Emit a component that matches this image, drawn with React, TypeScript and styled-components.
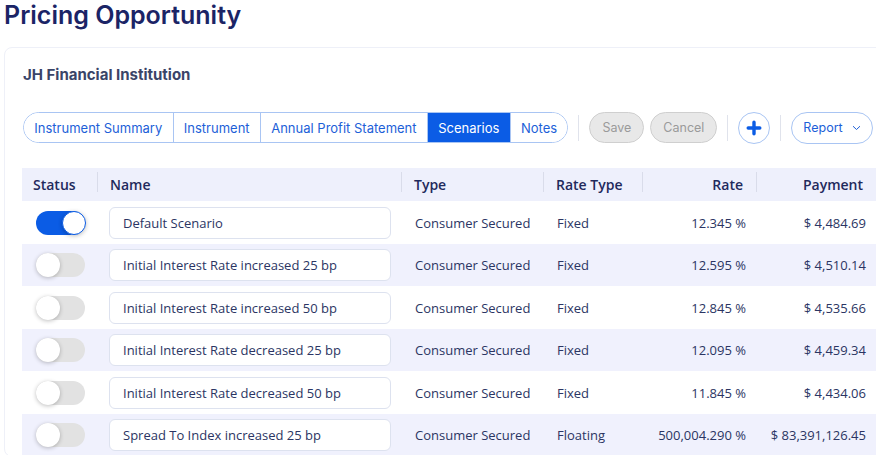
import { FC } from "react";
import styled, { createGlobalStyle } from "styled-components";

const GlobalStyle = createGlobalStyle`
  html, body {
    margin: 0;
    padding: 0;
    background: #fff;
    overflow: hidden;
  }
  * {
    box-sizing: border-box;
  }
`;

type Scenario = {
  active: boolean;
  name: string;
  type: string;
  rateType: string;
  rate: string;
  payment: string;
};

const scenarios: Scenario[] = [
  { active: true, name: "Default Scenario", type: "Consumer Secured", rateType: "Fixed", rate: "12.345 %", payment: "$ 4,484.69" },
  { active: false, name: "Initial Interest Rate increased 25 bp", type: "Consumer Secured", rateType: "Fixed", rate: "12.595 %", payment: "$ 4,510.14" },
  { active: false, name: "Initial Interest Rate increased 50 bp", type: "Consumer Secured", rateType: "Fixed", rate: "12.845 %", payment: "$ 4,535.66" },
  { active: false, name: "Initial Interest Rate decreased 25 bp", type: "Consumer Secured", rateType: "Fixed", rate: "12.095 %", payment: "$ 4,459.34" },
  { active: false, name: "Initial Interest Rate decreased 50 bp", type: "Consumer Secured", rateType: "Fixed", rate: "11.845 %", payment: "$ 4,434.06" },
  { active: false, name: "Spread To Index increased 25 bp", type: "Consumer Secured", rateType: "Floating", rate: "500,004.290 %", payment: "$ 83,391,126.45" },
];

const tabs = ["Instrument Summary", "Instrument", "Annual Profit Statement", "Scenarios", "Notes"];

const App: FC = () => {
  return (
    <Page>
      <GlobalStyle />
      <Title>Pricing Opportunity</Title>
      <Card>
        <Institution>JH Financial Institution</Institution>
        <Toolbar>
          <TabGroup>
            {tabs.map((t) => (
              <Tab key={t} $active={t === "Scenarios"}>
                {t}
              </Tab>
            ))}
          </TabGroup>
          <Divider />
          <GreyButton>Save</GreyButton>
          <GreyButton>Cancel</GreyButton>
          <Divider />
          <AddButton aria-label="Add">
            <svg width="16" height="16" viewBox="0 0 16 16">
              <path d="M8 2.2v11.6M2.2 8h11.6" stroke="#0b5ce5" strokeWidth="3.4" strokeLinecap="round" />
            </svg>
          </AddButton>
          <Divider />
          <ReportButton>
            Report
            <svg width="9" height="6" viewBox="0 0 9 6">
              <path d="M1 1.2l3.5 3.3L8 1.2" fill="none" stroke="#1d5fd8" strokeWidth="1" />
            </svg>
          </ReportButton>
        </Toolbar>

        <Table>
          <HeaderRow>
            <HeadCell>Status</HeadCell>
            <HeadCell $sep>Name</HeadCell>
            <HeadCell $sep>Type</HeadCell>
            <HeadCell $sep>Rate Type</HeadCell>
            <HeadCell $sep $right>Rate</HeadCell>
            <HeadCell $sep $right>Payment</HeadCell>
          </HeaderRow>
          {scenarios.map((s, i) => (
            <Row key={s.name} $striped={i % 2 === 1}>
              <Cell $center>
                <Toggle $on={s.active}>
                  <Knob $on={s.active} />
                </Toggle>
              </Cell>
              <Cell $input>
                <NameInput>{s.name}</NameInput>
              </Cell>
              <Cell>{s.type}</Cell>
              <Cell>{s.rateType}</Cell>
              <Cell $right>{s.rate}</Cell>
              <Cell $right>{s.payment}</Cell>
            </Row>
          ))}
        </Table>
      </Card>
    </Page>
  );
};

export default App;

const Page = styled.div`
  padding: 0 0 0 4px;
  width: 920px;
`;

const Title = styled.h1`
  margin: 0 0 17px;
  font-family: Inter, "Liberation Sans", sans-serif;
  font-size: 25px;
  line-height: 30px;
  font-weight: 600;
  color: #1b2466;
`;

const Card = styled.div`
  border: 1px solid #eef0f8;
  border-radius: 8px;
  padding: 17px 0 0 17px;
  width: 910px;
`;

const Institution = styled.h2`
  margin: 0 0 27px 1px;
  font-family: Inter, "Liberation Sans", sans-serif;
  font-size: 15px;
  line-height: 20px;
  font-weight: 700;
  color: #3a4468;
`;

const Toolbar = styled.div`
  display: flex;
  align-items: center;
  gap: 6px;
  margin-left: 1px;
  height: 31px;
`;

const TabGroup = styled.div`
  display: flex;
  height: 31px;
  border: 1px solid #a9c5f3;
  border-radius: 16px;
  overflow: hidden;
`;

const Tab = styled.div<{ $active?: boolean }>`
  display: flex;
  align-items: center;
  padding: 0 10.3px;
  font-family: Inter, "Liberation Sans", sans-serif;
  font-size: 13px;
  color: ${(p) => (p.$active ? "#fff" : "#1d5fd8")};
  background: ${(p) => (p.$active ? "#0b5ce5" : "#fff")};
  & + & {
    border-left: 1px solid #a9c5f3;
  }
`;

const Divider = styled.div`
  width: 1px;
  height: 26px;
  background: #e0e3ec;
  margin: 0 4px;
`;

const GreyButton = styled.div`
  height: 31px;
  padding: 0 12px;
  display: flex;
  align-items: center;
  border: 1px solid #cfcfcf;
  border-radius: 16px;
  background: #e8e8e8;
  font-family: Inter, "Liberation Sans", sans-serif;
  font-size: 12.5px;
  color: #9a9a9a;
`;

const AddButton = styled.div`
  width: 32px;
  height: 32px;
  border: 1px solid #a9c5f3;
  border-radius: 50%;
  display: flex;
  align-items: center;
  justify-content: center;
  background: #fff;
`;

const ReportButton = styled.div`
  height: 32px;
  padding: 0 11px;
  display: flex;
  align-items: center;
  gap: 9px;
  border: 1px solid #a9c5f3;
  border-radius: 16px;
  font-family: Inter, "Liberation Sans", sans-serif;
  font-size: 12.5px;
  color: #1d5fd8;
`;

const Table = styled.div`
  margin-top: 25px;
  width: 854px;
  font-family: "Open Sans", "Noto Sans", sans-serif;
`;

const cols = "75px 304px 142px 99px 114px 120px";

const HeaderRow = styled.div`
  display: grid;
  grid-template-columns: ${cols};
  height: 33px;
  background: #eef0fc;
  align-items: center;
`;

const HeadCell = styled.div<{ $sep?: boolean; $right?: boolean }>`
  position: relative;
  padding: 0 ${(p) => (p.$right ? "13px" : "12px")} 0 ${(p) => (p.$sep ? "13px" : "11px")};
  font-size: 14px;
  font-weight: 600;
  color: #1f2a5c;
  text-align: ${(p) => (p.$right ? "right" : "left")};
  ${(p) =>
    p.$sep &&
    `&::before {
      content: "";
      position: absolute;
      left: 0;
      top: -3px;
      width: 1px;
      height: 20px;
      background: #d9dcea;
    }`}
`;

const Row = styled.div<{ $striped?: boolean }>`
  display: grid;
  grid-template-columns: ${cols};
  height: 42.5px;
  align-items: center;
  background: ${(p) => (p.$striped ? "#f0f1fd" : "#fff")};
`;

const Cell = styled.div<{ $right?: boolean; $center?: boolean; $input?: boolean }>`
  padding: ${(p) => (p.$input ? "0 10px 0 12px" : p.$right ? "0 10px 0 12px" : "0 12px 0 14px")};
  font-size: 13px;
  line-height: 20px;
  padding-top: 1px;
  color: #2b3563;
  white-space: nowrap;
  text-align: ${(p) => (p.$right ? "right" : "left")};
  display: ${(p) => (p.$center ? "flex" : "block")};
  justify-content: center;
`;

const Toggle = styled.div<{ $on?: boolean }>`
  position: relative;
  width: 50px;
  height: 24px;
  border-radius: 12px;
  background: ${(p) => (p.$on ? "#0b5ce5" : "#e2e2e2")};
`;

const Knob = styled.div<{ $on?: boolean }>`
  position: absolute;
  top: 0;
  left: ${(p) => (p.$on ? "26px" : "0")};
  width: 24px;
  height: 24px;
  border-radius: 50%;
  background: #fff;
  border: ${(p) => (p.$on ? "1.5px solid #0b5ce5" : "none")};
  box-shadow: 0 1px 4px rgba(0, 0, 0, 0.25);
`;

const NameInput = styled.div`
  height: 32px;
  display: flex;
  align-items: center;
  padding: 0 13px;
  border: 1px solid #dde2ef;
  border-radius: 6px;
  background: #fff;
  font-size: 13px;
  color: #2b3563;
`;
